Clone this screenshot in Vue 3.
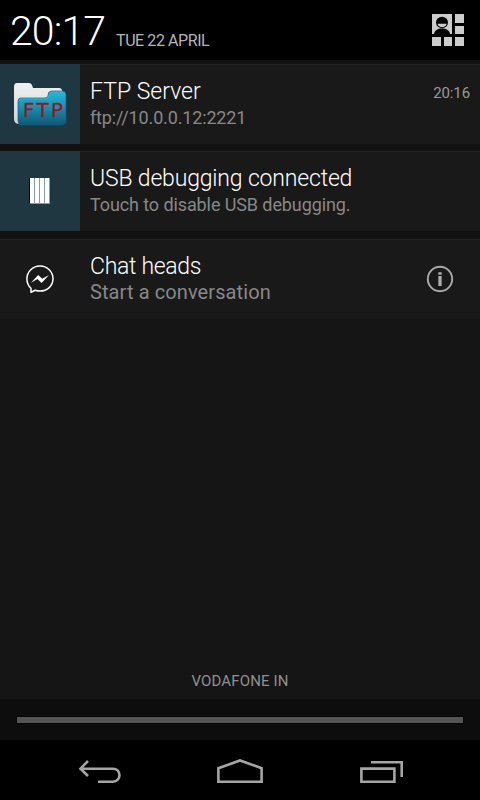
<template>
  <div class="shade">
    <header class="header">
      <span class="clock">20:17</span>
      <span class="date">TUE 22 APRIL</span>
      <svg class="settings" width="32" height="32" viewBox="0 0 32 32">
        <path fill="#ccc" d="M0 0h20v20H0zM23 0h9v9h-9zM23 12h9v8h-9zM0 23h9v9H0zM12 23h8v9h-8zM23 23h9v9h-9z" />
        <ellipse cx="10" cy="8.500" rx="6" ry="5.800" fill="#000" />
        <path fill="#000" d="M2 20c.5-3.500 3.500-5.500 8-5.500s7.500 2 8 5.500z" />
        <path fill="#ccc" d="M5.500 9.800h9.200c-.8 4.600-8.400 4.600-9.200 0z" />
      </svg>
    </header>

    <main class="list">
      <div v-for="item in items" :key="item.id" class="row" :class="item.id">
        <div class="icon">
          <svg v-if="item.id === 'ftp'" width="56" height="48" viewBox="0 0 56 48">
            <defs>
              <linearGradient id="paper" x1="0" y1="0" x2="0" y2="1">
                <stop offset="0" stop-color="#f0f0f0" />
                <stop offset="1" stop-color="#d2d4d5" />
              </linearGradient>
              <linearGradient id="folder" x1="0" y1="0" x2="0" y2="1">
                <stop offset="0" stop-color="#26b8dd" />
                <stop offset="0.500" stop-color="#188eb0" />
                <stop offset="1" stop-color="#0e5876" />
              </linearGradient>
            </defs>
            <path fill="url(#paper)" d="M5 3h12q2 0 3 2l1 3h26q3 0 3.500 4v10L8 44H6q-4-1-4-5V7q0-4 3-4z" />
            <path fill="url(#folder)" stroke="#126078" stroke-width=".7" d="M9 18h23q4 0 4-2v-1q0-4 4-4h10q4 0 4 4v25q0 5-5 5H10q-4 0-4-4V21q0-3 3-3z" />
            <path fill="none" stroke="#2cb4d2" stroke-width="1" d="M7.500 21q.5-2 3-2H33q4 0 4-3 0-4 3-4h10q3 0 3 3" />
            <text x="11" y="36.500" textLength="40" class="ftp-label">FTP</text>
          </svg>
          <svg v-else-if="item.id === 'usb'" width="22" height="28" viewBox="0 0 22 28">
            <path fill="#00070a" d="M0 1h1v25H0z" />
            <path fill="#829ca5" d="M1 1h20v26H1z" />
            <path fill="#fff" d="M1 1h4v25H1zM6 1h4v25H6zM11 1h4v25h-4zM16 1h4v25h-4z" />
          </svg>
          <svg v-else width="28" height="28" viewBox="0 0 28 28">
            <path fill="none" stroke="#fff" stroke-width="1.500" stroke-linejoin="round" d="M5 23.300C2.300 21 .9 17.500.9 13.800.9 6.600 6.800 1 14 1s13 5.600 13 12.800-5.800 12.300-13 12.300c-1.800 0-3.300-.3-4.800-.8L5 27.300z" />
            <path fill="#fff" d="M5 17.700 12.200 10l4 3.800 6.800-3.900-7.400 8-4.100-3.800z" />
          </svg>
        </div>
        <div class="content">
          <div class="title">{{ item.title }}</div>
          <div class="text">{{ item.text }}</div>
        </div>
        <span v-if="item.time" class="time">{{ item.time }}</span>
        <svg v-if="item.info" class="info" width="28" height="28" viewBox="0 0 28 28">
          <circle cx="14" cy="14" r="12.200" fill="none" stroke="#aaa" stroke-width="1.900" />
          <path fill="#aaa" d="M12.300 7.300h3.400v2.400h-3.400zM12.300 11h3.400v10h-3.400z" />
        </svg>
      </div>
    </main>

    <div class="carrier">VODAFONE IN</div>
    <div class="handle"><div class="bar"></div></div>

    <nav class="nav">
      <svg width="44" height="26" viewBox="0 0 44 26">
        <path fill="none" stroke="#a5a5a5" stroke-width="2.600" d="M10 3 2.500 10.700 10 18M3 10.700h31.700c9 0 9 13 0 13H20" />
      </svg>
      <svg width="48" height="26" viewBox="0 0 48 26">
        <path fill="none" stroke="#a5a5a5" stroke-width="2.600" d="M2.400 23.700V10.200L24 2.500l21.600 7.700v13.500z" />
      </svg>
      <svg width="44" height="26" viewBox="0 0 44 26">
        <path fill="none" stroke="#a5a5a5" stroke-width="2.600" d="M1.400 10.600h33v13.100h-33zM11 4.300h30.700V19" />
      </svg>
    </nav>
  </div>
</template>

<script setup>
const items = [
  { id: 'ftp', title: 'FTP Server', text: 'ftp://10.0.0.12:2221', time: '20:16' },
  { id: 'usb', title: 'USB debugging connected', text: 'Touch to disable USB debugging.' },
  { id: 'chat', title: 'Chat heads', text: 'Start a conversation', info: true },
];
</script>

<style>
body {
  background: #000;
}
</style>

<style scoped>
.shade {
  display: flex;
  flex-direction: column;
  width: 480px;
  height: 800px;
  overflow: hidden;
  background: #151515;
  font-family: Roboto, sans-serif;
  white-space: nowrap;
}
.header {
  display: flex;
  align-items: flex-start;
  height: 60px;
  box-sizing: border-box;
  padding: 0 16px 0 10px;
  background: #000;
}
.clock {
  width: 106px;
  color: #fff;
  font-size: 41px;
  font-weight: 300;
  line-height: 63px;
  letter-spacing: -0.9px;
}
.date {
  color: #b5b5b5;
  font-size: 16px;
  line-height: 81px;
  letter-spacing: -0.42px;
}
.settings {
  margin: 14px 0 0 auto;
}
.list {
  display: flex;
  flex-direction: column;
  padding-top: 4px;
  background: #111;
}
.row {
  display: flex;
  height: 80px;
  box-sizing: border-box;
  border-top: 1px solid #222;
  background: #191919;
}
.usb {
  margin: 7px 0 8px;
}
.icon {
  display: flex;
  align-items: center;
  justify-content: center;
  width: 80px;
  flex: none;
  margin-top: -1px;
}
.ftp .icon,
.usb .icon {
  background: #1f3741;
}
.ftp-label {
  fill: #98171c;
  stroke: #98171c;
  stroke-width: 0.3px;
  font-family: "DejaVu Sans", sans-serif;
  font-size: 20px;
}
.content {
  flex: 1;
  padding: 12px 0 0 10px;
}
.title {
  margin-bottom: -1px;
  color: #fff;
  font-size: 23px;
  font-weight: 300;
  line-height: 30px;
}
.text {
  color: #888;
  font-size: 18px;
  line-height: 24px;
}
.ftp .content {
  padding-top: 11px;
}
.ftp .title {
  margin-top: 1px;
}
.ftp .text {
  letter-spacing: -0.15px;
}
.usb .title {
  letter-spacing: -0.17px;
}
.usb .text {
  letter-spacing: -0.1px;
}
.chat .title {
  letter-spacing: -0.3px;
}
.chat .text {
  font-size: 20px;
  line-height: 22px;
  letter-spacing: 0.1px;
}
.time {
  padding: 18px 10px 0 0;
  color: #999;
  font-size: 15px;
  line-height: 20px;
  letter-spacing: -0.1px;
}
.info {
  margin: 25px 26px 0 0;
}
.carrier {
  margin-top: auto;
  padding-bottom: 8px;
  color: #909090;
  font-size: 15px;
  line-height: 20px;
  letter-spacing: 0.15px;
  text-align: center;
}
.handle {
  height: 41px;
  box-sizing: border-box;
  padding: 18px 17px 0;
  background: #0d0d0d;
}
.bar {
  height: 6px;
  background: #555;
  outline: 1px solid #050505;
}
.nav {
  display: grid;
  grid-template-columns: 138px 144px 44px;
  align-content: start;
  height: 60px;
  box-sizing: border-box;
  padding: 18px 76px 0 78px;
  background: #000;
}
</style>
